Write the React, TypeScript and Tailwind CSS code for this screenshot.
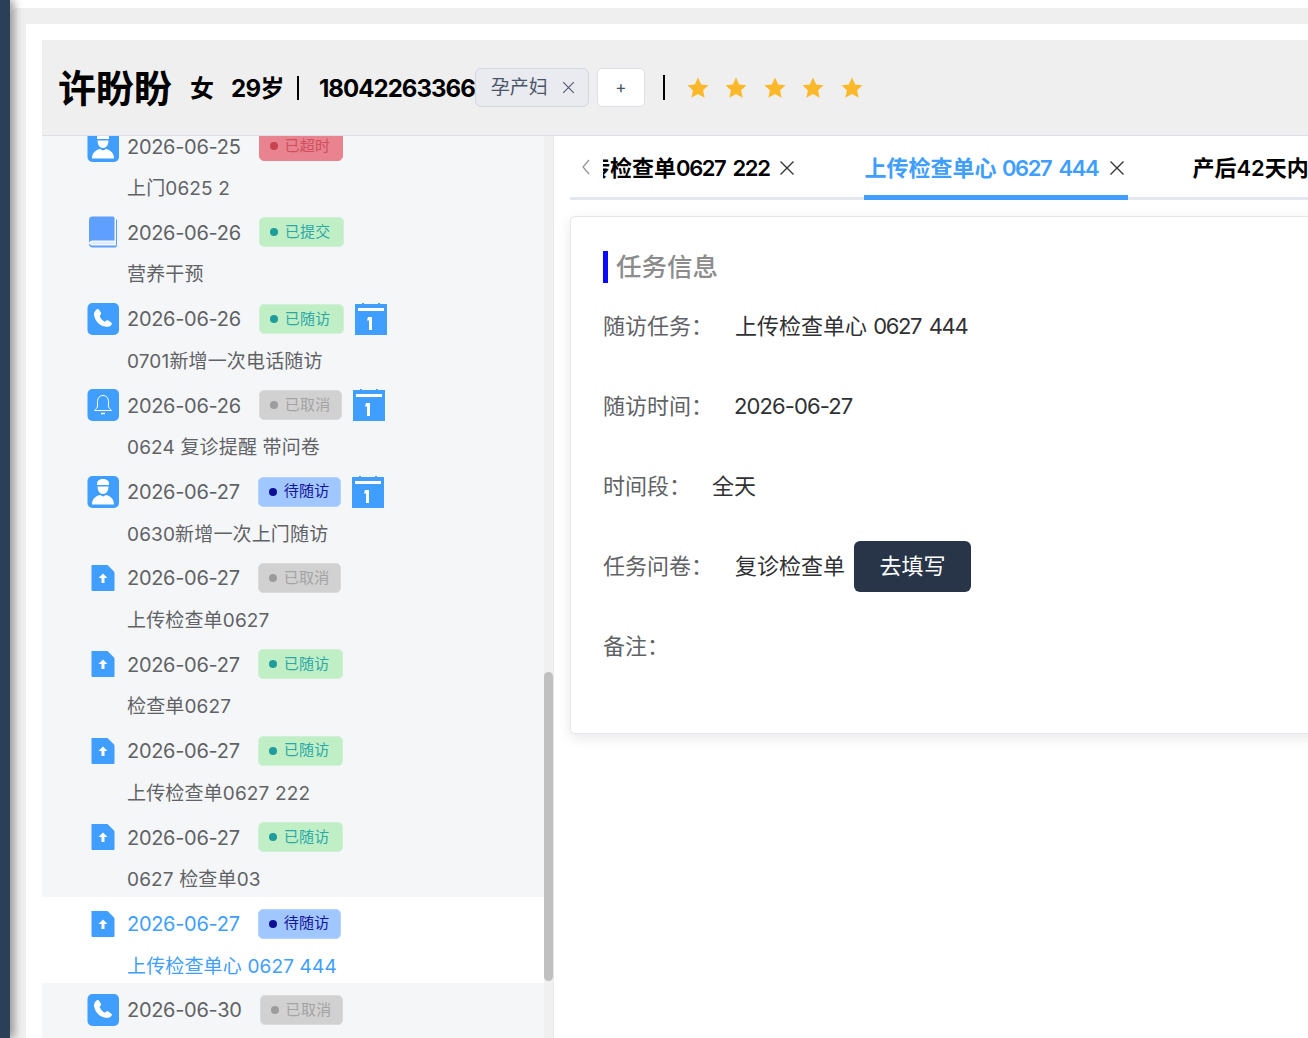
import React from 'react';

const cjk = "font-['Inter','Noto_Sans_CJK_SC',sans-serif]";

type Status = 'overdue' | 'submitted' | 'done' | 'cancelled' | 'pending';
type Kind = 'nurse' | 'book' | 'phone' | 'bell' | 'upload';

interface Visit {
  kind: Kind;
  date: string;
  status: Status;
  title: string;
  calendar?: boolean;
  active?: boolean;
}

const visits: Visit[] = [
  { kind: 'nurse', date: '2026-06-25', status: 'overdue', title: '上门0625 2' },
  { kind: 'book', date: '2026-06-26', status: 'submitted', title: '营养干预' },
  { kind: 'phone', date: '2026-06-26', status: 'done', title: '0701新增一次电话随访', calendar: true },
  { kind: 'bell', date: '2026-06-26', status: 'cancelled', title: '0624 复诊提醒 带问卷', calendar: true },
  { kind: 'nurse', date: '2026-06-27', status: 'pending', title: '0630新增一次上门随访', calendar: true },
  { kind: 'upload', date: '2026-06-27', status: 'cancelled', title: '上传检查单0627' },
  { kind: 'upload', date: '2026-06-27', status: 'done', title: '检查单0627' },
  { kind: 'upload', date: '2026-06-27', status: 'done', title: '上传检查单0627 222' },
  { kind: 'upload', date: '2026-06-27', status: 'done', title: '0627 检查单03' },
  { kind: 'upload', date: '2026-06-27', status: 'pending', title: '上传检查单心 0627 444', active: true },
  { kind: 'phone', date: '2026-06-30', status: 'cancelled', title: '' },
];

const statusStyles: Record<Status, { label: string; box: string; dot: string }> = {
  overdue: { label: '已超时', box: 'bg-[#e8838f] border-[#e8838f] text-[#cf4f5c] w-[84px]', dot: 'bg-[#c9424f]' },
  submitted: { label: '已提交', box: 'bg-[#c1efc5] border-[#d0f0d5] text-[#2aa8a8] w-[85px]', dot: 'bg-[#1f9c9c]' },
  done: { label: '已随访', box: 'bg-[#c1efc5] border-[#d0f0d5] text-[#2aa8a8] w-[85px]', dot: 'bg-[#1f9c9c]' },
  cancelled: { label: '已取消', box: 'bg-[#d1d1d1] border-[#dadada] text-[#a3a3a3] w-[83px]', dot: 'bg-[#9c9c9c]' },
  pending: { label: '待随访', box: 'bg-[#a0c7ff] border-[#b3d2ff] text-[#14149a] w-[83px]', dot: 'bg-[#0f0f96]' },
};

const KindIcon = ({ kind }: { kind: Kind }) => {
  if (kind === 'book') {
    return (
      <svg width="32" height="32" viewBox="0 0 32 32">
        <path d="M2 4a3.500 3.500 0 0 1 3.500-3.500H26a1.500 1.500 0 0 1 1.500 1.500v22.500H6a4 4 0 0 0-4 2z" fill="#5e9fff" />
        <path d="M29 3.500h1v26a2 2 0 0 1-2 2H6a4 4 0 0 1-4-4V27a4 4 0 0 0 4 2.500h23z" fill="#5e9fff" />
        <path d="M5 27h21" stroke="#d6e6ff" strokeWidth="1.500" strokeLinecap="round" />
      </svg>
    );
  }
  if (kind === 'upload') {
    return (
      <svg width="32" height="32" viewBox="0 0 32 32">
        <path d="M4.500 3h16l6.500 6.500q.5.500.5 1.500v17a1 1 0 0 1-1 1H5.500a1 1 0 0 1-1-1z" fill="#409eff" />
        <path d="M16 11.500l4.500 4.500h-3v5h-3v-5h-3z" fill="#fff" />
      </svg>
    );
  }
  return (
    <svg width="32" height="32" viewBox="0 0 32 32">
      <rect x="0.500" y="0" width="31.500" height="32" rx="5" fill="#409eff" />
      {kind === 'phone' && (
        <path
          d="M9.500 6.500c1-.8 2-.6 2.600.3l1.700 2.700c.5.800.4 1.600-.2 2.300l-1 1.100c.9 2.400 3 4.800 5.300 5.800l1.200-1c.7-.6 1.500-.6 2.300-.1l2.700 1.800c.9.600 1 1.800.2 2.700-1.100 1.300-2.600 2-4.200 1.700C13.300 23.900 8 18.300 7 12c-.3-2 .9-4.200 2.500-5.500z"
          fill="#fff"
        />
      )}
      {kind === 'bell' && (
        <g fill="none" stroke="#fff" strokeWidth="1" strokeLinejoin="round">
          <path d="M16 6.500c-3.400 0-5.500 2.600-5.500 6v4.500c0 1.500-1.500 3-3 4.500h17c-1.500-1.500-3-3-3-4.500v-4.500c0-3.400-2.100-6-5.500-6z" />
          <path d="M14 24.500h4" strokeWidth="1.500" />
        </g>
      )}
      {kind === 'nurse' && (
        <g fill="#fff">
          <path d="M10 7.500C10 4.500 12.800 3 16 3s6 1.500 6 4.500V9H10z" />
          <path d="M10.500 10.500h11c0 4.500-2.300 7.500-5.500 7.500s-5.500-3-5.500-7.500z" />
          <path d="M5 28.500c0-5 3-8.500 8-9.500l3 1.500 3-1.500c5 1 8 4.500 8 9.500z" />
        </g>
      )}
    </svg>
  );
};

const CalendarIcon = () => (
  <svg width="32" height="32" viewBox="0 0 32 32">
    <path d="M0 1h7V0h2v1h14V0h2v1h7v31H0z" fill="#409eff" />
    <rect x="3" y="5" width="26" height="3" fill="#fff" />
    <path d="M13 14h4v13h-3v-9.500h-2z" fill="#fff" />
  </svg>
);

const CloseIcon = ({ size = 16, color = '#303133' }: { size?: number; color?: string }) => (
  <svg width={size} height={size} viewBox="0 0 16 16" fill="none" stroke={color} strokeWidth="1.300">
    <path d="M1.500 1.500l13 13M14.500 1.500l-13 13" />
  </svg>
);

const Star = () => (
  <svg width="24" height="24" viewBox="0 0 24 24">
    <path d="M12 1.500l3.200 7 7.300.8-5.400 5 1.500 7.500-6.600-3.800-6.600 3.800 1.500-7.500-5.400-5 7.300-.8z" fill="#fab82a" />
  </svg>
);

const Digits = ({ children }: { children: React.ReactNode }) => (
  <span className="tracking-[-1.400px] [word-spacing:3px]">{children}</span>
);

const VisitRow = ({ visit }: { visit: Visit }) => {
  const s = statusStyles[visit.status];
  return (
    <div className={`h-[86.4px] pl-[45px] pt-[11px] ${visit.active ? 'bg-white text-[#409eff]' : 'text-[#606266]'}`}>
      <div className="flex items-center h-8 whitespace-nowrap">
        <KindIcon kind={visit.kind} />
        <span className="ml-2 mt-[1px] text-[20px] tracking-[-0.3px]">{visit.date}</span>
        <span className={`ml-[18px] flex items-center h-[30px] pl-[10px] rounded-[5px] border text-[15px] tracking-[0.3px] ${s.box}`}>
          <span className={`w-2 h-2 rounded-full mr-[7px] ${s.dot}`} />
          {s.label}
        </span>
        {visit.calendar && (
          <span className="ml-[11px]">
            <CalendarIcon />
          </span>
        )}
      </div>
      <div className="ml-10 mt-[11px] text-[19px] leading-[32px] tracking-[0.15px]">{visit.title}</div>
    </div>
  );
};

const Field = ({ label, gap, children }: { label: string; gap: string; children?: React.ReactNode }) => (
  <div className="flex items-center h-[80px] text-[22px]">
    <span className={`text-[#606266] ${gap}`}>{label}</span>
    {children}
  </div>
);

export default function App() {
  return (
    <div className={`flex h-[1038px] w-[1308px] overflow-hidden bg-white ${cjk}`}>
      <aside className="relative z-10 w-[10px] shrink-0 bg-[#2b4058] shadow-[4px_0_9px_rgba(0,0,0,0.4)]" />
      <main className="flex-1 min-w-0 pt-2 bg-white">
        <div className="h-full rounded-tl-lg bg-[#efefef] pt-4">
          <div className="flex flex-col h-full ml-4 pl-4 pt-4 bg-white">
            {/* patient header */}
            <header className="flex items-center h-[96px] shrink-0 pl-4 bg-[#efefef] border-b border-[#dcdfe6] text-black whitespace-nowrap">
              <h1 className="mt-[1px] text-[38px] font-bold leading-none">许盼盼</h1>
              <span className="ml-[18px] mt-[2px] text-[24px] font-semibold">女</span>
              <span className="ml-[17px] mt-[2px] text-[24px] font-bold tracking-[-0.6px]">29岁</span>
              <span className="ml-[13px] w-[2px] h-[24px] bg-black" />
              <span className="ml-[20px] mt-[2px] text-[24px] font-bold tracking-[-0.95px]">18042263366</span>
              <span className="flex items-center justify-between h-[39px] w-[114px] pl-[15px] pr-[13px] rounded-[6px] border border-[#d3d7e0] bg-[#e9ebf0] text-[19px] text-[#4a5568]">
                <span className="mt-[1px]">孕产妇</span>
                <CloseIcon size={13} color="#4a5568" />
              </span>
              <button className="ml-2 flex items-center justify-center h-[39px] w-[48px] rounded-[5px] border border-[#dcdfe6] bg-white text-[17px] text-[#4a5568]">
                +
              </button>
              <span className="ml-[18px] w-[2px] h-[25px] bg-black" />
              <span className="ml-[21px] flex gap-[14.500px]">
                <Star />
                <Star />
                <Star />
                <Star />
                <Star />
              </span>
            </header>

            <div className="flex flex-1 min-h-0">
              {/* visit list */}
              <section className="relative w-[512px] shrink-0 overflow-hidden bg-[#f5f6f8] border-r border-[#e8e8e8]">
                <div className="-mt-[17px]">
                  {visits.map((v, i) => (
                    <VisitRow key={i} visit={v} />
                  ))}
                </div>
                <div className="absolute right-0 top-0 bottom-0 w-[9px] bg-[#f0f0f0]">
                  <div className="absolute top-[536px] h-[309px] w-full rounded-full bg-[#c0c0c0]" />
                </div>
              </section>

              {/* task detail */}
              <section className="flex-1 min-w-0 pl-4 bg-white overflow-hidden">
                <div className="relative flex h-[64px] whitespace-nowrap overflow-hidden">
                  <div className="absolute left-0 right-0 bottom-0 h-[3px] bg-[#e4e7ed]" />
                  <div className="relative flex items-center justify-center w-[31px] h-[61px] shrink-0 mr-[2px]">
                    <svg width="10" height="16" viewBox="0 0 10 16" fill="none" stroke="#909399" strokeWidth="1.200">
                      <path d="M8 1L2 8l6 7" />
                    </svg>
                  </div>
                  <div className="relative flex-1 flex h-[64px] overflow-hidden text-[22px] font-semibold">
                    <div className="flex items-center h-[64px] shrink-0 -ml-[37px] mr-[69px] text-black">
                      <span>上传检查单<Digits>0627 222</Digits></span>
                      <span className="ml-[10px]"><CloseIcon /></span>
                    </div>
                    <div className="flex items-center h-[64px] shrink-0 w-[264px] pt-[5px] border-b-[5px] border-[#409eff] text-[#409eff]">
                      <span>上传检查单心 <Digits>0627 444</Digits></span>
                      <span className="ml-[11px]"><CloseIcon /></span>
                    </div>
                    <div className="flex items-center h-[64px] shrink-0 pl-[64px] text-black">产后42天内</div>
                  </div>
                </div>

                <div className="mt-4 w-[800px] h-[518px] rounded-[5px] border border-[#e4e7ed] bg-white pt-[34px] pl-[32px] shadow-[0_4px_14px_rgba(0,0,0,0.09)]">
                  <h2 className="flex items-center h-8 border-l-[5px] border-[#0a0aff] pl-2 text-[25.500px] font-medium text-[#8c8c8c]">
                    <span className="mt-[1px]">任务信息</span>
                  </h2>
                  <div className="mt-[3px]">
                    <Field label="随访任务：" gap="w-[132px]">
                      <span className="text-[#303133]">上传检查单心 <Digits>0627 444</Digits></span>
                    </Field>
                    <Field label="随访时间：" gap="w-[131px]">
                      <span className="text-[#303133] tracking-[-0.9px]">2026-06-27</span>
                    </Field>
                    <Field label="时间段：" gap="w-[109px]">
                      <span className="text-[#303133]">全天</span>
                    </Field>
                    <Field label="任务问卷：" gap="w-[132px]">
                      <span className="text-[#303133]">复诊检查单</span>
                      <button className="ml-[9px] h-[51px] w-[117px] rounded-[6px] bg-[#283549] text-white text-[22px]">去填写</button>
                    </Field>
                    <Field label="备注：" gap="w-[132px]" />
                  </div>
                </div>
              </section>
            </div>
          </div>
        </div>
      </main>
    </div>
  );
}
